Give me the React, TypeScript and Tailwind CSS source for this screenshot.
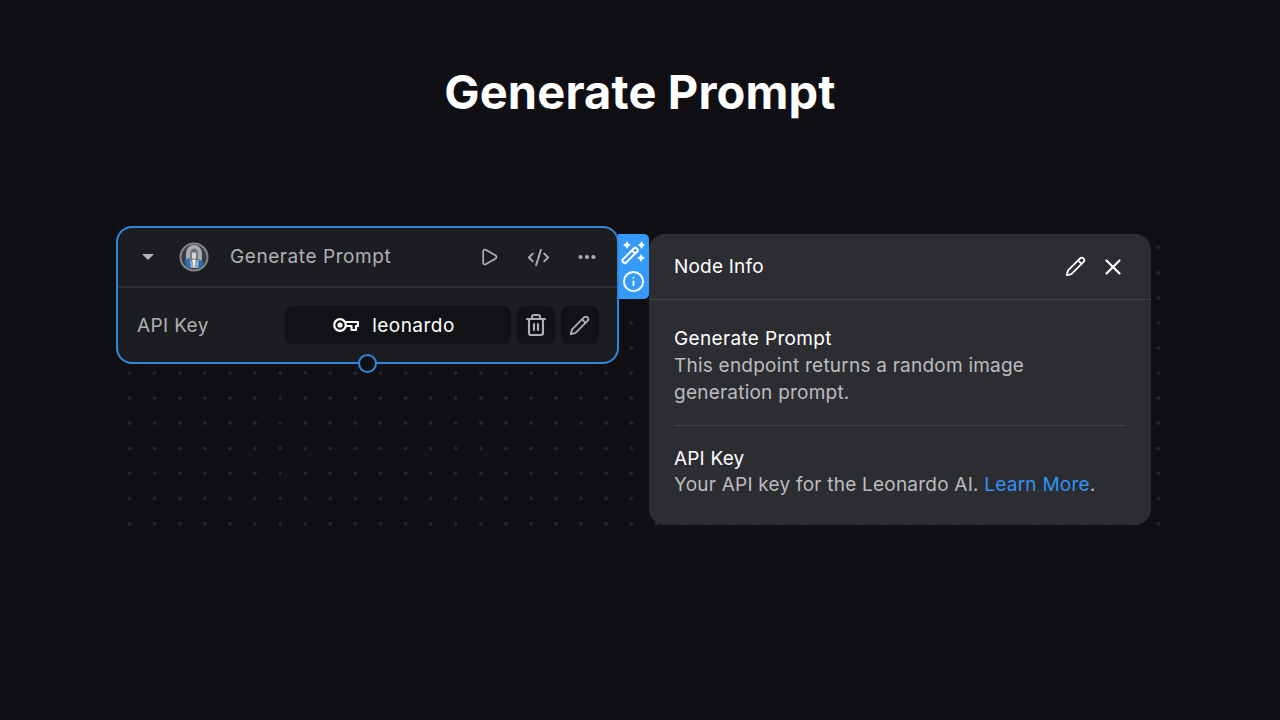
import { CodeXml, Ellipsis, Info, Pencil, Play, Trash2, X } from "lucide-react";

const Avatar = () => (
  <svg width="30" height="30" viewBox="0 0 30 30">
    <circle cx="15" cy="15" r="14.500" fill="#85878a" />
    <circle cx="15" cy="15" r="12.500" fill="#3a3c40" />
    <path d="M15 3c-5.500 0-8 4.500-8 9.500v8l3 5.500h10l3-5.500v-8C23 7.500 20.500 3 15 3z" fill="#a9abae" />
    <path d="M15 6.500c-2.600 0-3.800 2.200-3.800 5v5.500l3.800 8 3.800-8v-5.500c0-2.800-1.200-5-3.800-5z" fill="#6b6e72" />
    <path d="M12.800 10.500h4.400v5.500l-2.200 2-2.200-2z" fill="#d2d4d6" />
    <path d="M5.500 19l5-3.500 1.500 11.500-4-1.500zM24.500 20l-4.500-3-1 10 3.500-1.500z" fill="#2470bd" />
    <path d="M13 18l2 8.500 2-8.500z" fill="#f2f2f2" />
  </svg>
);

const KeyIcon = () => (
  <svg width="26" height="14" viewBox="0 0 26 14" fill="none" stroke="white" strokeWidth="2.200" strokeLinejoin="round">
    <circle cx="7" cy="7" r="5.800" />
    <circle cx="7" cy="7" r="1.500" />
    <path d="M12.500 4H25V8H23V12H18.500V8H12.800" />
  </svg>
);

const WandIcon = () => (
  <svg width="24" height="24" viewBox="0 0 24 24" fill="none">
    <path d="M1.700 18.600L13.300 7a1.400 1.400 0 0 1 2 0l1.200 1.200a1.400 1.400 0 0 1 0 2L4.900 21.800a1.400 1.400 0 0 1-2 0l-1.200-1.200a1.400 1.400 0 0 1 0-2z" stroke="white" strokeWidth="2" />
    <path d="M11 9.500l3 3" stroke="white" strokeWidth="2" />
    <path d="M6 0l1.400 2.600L10 4 7.400 5.400 6 8 4.600 5.400 2 4l2.600-1.400zM20.500 0l1.400 2.600L24 4l-2.100 1.400L20.500 8l-1.400-2.600L17 4l2.100-1.400zM20 13l1.400 2.600L24 17l-2.600 1.400L20 21l-1.400-2.600L16 17l2.600-1.400z" fill="white" />
  </svg>
);

const App = () => {
  return (
    <div className="relative h-screen overflow-hidden bg-[#101014] font-['Inter',sans-serif]">
      {/* dotted canvas behind the node */}
      <div className="absolute left-[117px] top-[235px] h-[291px] w-[1045px] bg-[radial-gradient(circle,#2a2a2e_1.5px,transparent_1.6px)] bg-[length:25.1px_25.1px]" />

      <div className="relative">
        <h1 className="pt-[60px] text-center text-[47px] font-bold leading-[64px] tracking-[0.15px] text-white">
          Generate Prompt
        </h1>

        <div className="mt-[102px] flex items-start pl-[116px]">
          {/* node */}
          <div className="relative w-[503px] rounded-[16px] border-2 border-[#2f88dc] bg-[#1c1d21]">
            <div className="box-content flex h-[58px] items-center border-b-2 border-[#2e2f33] pl-[18px] pr-[18px]">
              <div className="flex h-6 w-6 items-center justify-center">
                <div className="h-0 w-0 border-x-[6px] border-t-[6px] border-x-transparent border-t-[#b4b4b6]" />
              </div>
              <div className="ml-[19px]">
                <Avatar />
              </div>
              <span className="ml-[21px] text-[19px] tracking-[0.03em] text-[#b0b0b3]">Generate Prompt</span>
              <div className="ml-auto flex items-center gap-[25px] text-[#b0b0b3]">
                <div className="flex w-6 justify-center">
                  <Play size={20} strokeWidth={2} />
                </div>
                <div className="flex w-6 justify-center">
                  <CodeXml size={23} strokeWidth={2} />
                </div>
                <div className="flex w-6 justify-center">
                  <Ellipsis size={22} strokeWidth={2.6} />
                </div>
              </div>
            </div>
            <div className="flex items-center py-[18px] pl-[19px] pr-[18px]">
              <span className="mt-[2px] flex-1 text-[19px] tracking-[0.02em] text-[#b0b0b3]">API Key</span>
              <div className="flex h-[38px] w-[226px] items-center justify-center gap-[13px] rounded-[8px] bg-[#111215] pr-[8px]">
                <KeyIcon />
                <span className="mt-[2px] text-[19px] tracking-[0.025em] text-white">leonardo</span>
              </div>
              <div className="ml-[6px] flex h-[38px] w-[38px] items-center justify-center rounded-[8px] bg-[#111215] pr-px text-[#b0b0b3]">
                <Trash2 size={24} strokeWidth={2.1} />
              </div>
              <div className="ml-[6px] flex h-[38px] w-[38px] items-center justify-center rounded-[8px] bg-[#111215] pr-[2px] text-[#b0b0b3]">
                <Pencil size={21} strokeWidth={2.1} />
              </div>
            </div>
            <div className="absolute -bottom-[11px] left-[240px] h-[19px] w-[19px] rounded-full border-2 border-[#2f88dc] bg-[#101014]" />
          </div>

          {/* side toolbar */}
          <div className="mt-[8px] -ml-px flex h-[65px] w-[31px] flex-col items-center justify-between rounded-r-[5px] bg-[#349bfb] pb-[6px] pr-[1px] pt-[7px] text-white">
            <WandIcon />
            <Info size={23} strokeWidth={2} />
          </div>

          {/* node info panel */}
          <div className="mt-[8px] h-[291px] w-[502px] rounded-[16px] bg-[#2c2d31]">
            <div className="flex h-[66px] items-center justify-between border-b border-[#414245] pl-[25px] pr-[25px]">
              <span className="mt-px text-[19px] tracking-[0.2px] text-white">Node Info</span>
              <div className="flex items-center gap-[14px] text-white">
                <Pencil size={21} strokeWidth={2} />
                <X size={26} strokeWidth={2} />
              </div>
            </div>
            <div className="px-[25px]">
              <div className="border-b border-[#414245] pb-[19px] pt-[25px]">
                <div className="text-[19px] leading-[27px] tracking-[0.018em] text-white">Generate Prompt</div>
                <p className="text-[19px] leading-[27px] tracking-[0.012em] text-[#bcbcbf]">
                  This endpoint returns a random image
                  <br />
                  generation prompt.
                </p>
              </div>
              <div className="pt-[20px]">
                <div className="text-[19px] leading-[26px] tracking-[0.01em] text-white">API Key</div>
                <p className="text-[19px] leading-[26px] tracking-[0.012em] text-[#bcbcbf]">
                  Your API key for the Leonardo AI. <span className="text-[#2f94f5]">Learn More</span>.
                </p>
              </div>
            </div>
          </div>
        </div>
      </div>
    </div>
  );
};

export default App;
